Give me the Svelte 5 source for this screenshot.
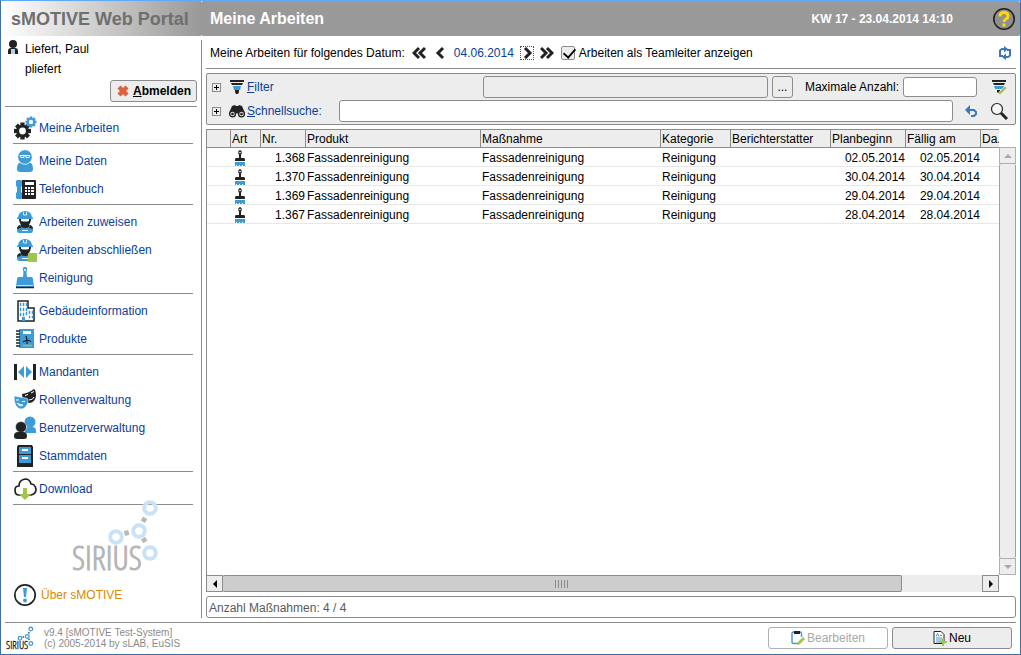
<script>
  const groups = [
    [{ label: 'Meine Arbeiten', icon: 'gears' }],
    [
      { label: 'Meine Daten', icon: 'person' },
      { label: 'Telefonbuch', icon: 'phone' }
    ],
    [
      { label: 'Arbeiten zuweisen', icon: 'worker' },
      { label: 'Arbeiten abschließen', icon: 'workerDone' },
      { label: 'Reinigung', icon: 'cleaning' }
    ],
    [
      { label: 'Gebäudeinformation', icon: 'building' },
      { label: 'Produkte', icon: 'book' }
    ],
    [
      { label: 'Mandanten', icon: 'clients' },
      { label: 'Rollenverwaltung', icon: 'masks' },
      { label: 'Benutzerverwaltung', icon: 'users' },
      { label: 'Stammdaten', icon: 'cabinet' }
    ],
    [{ label: 'Download', icon: 'cloud' }]
  ];

  const columns = [
    { label: '', width: 23 },
    { label: 'Art', width: 30 },
    { label: 'Nr.', width: 45 },
    { label: 'Produkt', width: 175 },
    { label: 'Maßnahme', width: 180 },
    { label: 'Kategorie', width: 70 },
    { label: 'Berichterstatter', width: 100 },
    { label: 'Planbeginn', width: 75 },
    { label: 'Fällig am', width: 75 },
    { label: 'Da.', width: 19 }
  ];

  const rows = [
    { nr: '1.368', date: '02.05.2014' },
    { nr: '1.370', date: '30.04.2014' },
    { nr: '1.369', date: '29.04.2014' },
    { nr: '1.367', date: '28.04.2014' }
  ];

  const total = columns.reduce((sum, c) => sum + c.width, 0);

  let teamLead = $state(true);
  let search = $state('');
  let maxCount = $state('');
</script>

{#snippet gear(cx, cy, r, color)}
  <g transform="translate({cx} {cy}) scale({r / 8})">
    {#each [0, 45, 90, 135] as a}
      <rect x="-2" y="-8" width="4" height="16" fill={color} transform="rotate({a})" />
    {/each}
    <circle r="6" fill={color} />
    <circle r="3.2" fill="#fff" />
  </g>
{/snippet}

{#snippet workerShape()}
  <path d="M3 20q0-5 5-6h6q5 1 5 6 0 3-2 3H5q-2 0-2-3z" fill="#3d9bd8" />
  <path d="M3 19q0-3 3-4l1 3zM19 19q0-3-3-4l-1 3z" fill="#222" />
  <path d="M7 14h8v3q-4 2-8 0z" fill="#222" />
  <path d="M8 20h6v1H8z" fill="#fff" />
  <path d="M5 9h12v1q-1 6-6 6t-6-6z" fill="#222" />
  <path d="M7 9h8v2q-4 1-8 0z" fill="#fff" />
  <path d="M3 8l1-1q1-6 7-6t7 6l1 1v1H3z" fill="#3d9bd8" />
  <path d="M9.500 2v3h3V2" stroke="#fff" stroke-width=".800" fill="none" />
{/snippet}

{#snippet menuIcon(name)}
  <svg class="menu-icon" viewBox="0 0 24 24" aria-hidden="true">
    {#if name === 'gears'}
      {@render gear(8.5, 15, 8.5, '#222')}
      {@render gear(17, 6, 5.5, '#3d9bd8')}
    {:else if name === 'person'}
      <path d="M3 20q0-7 5-7h6q5 0 5 7 0 3-3 3H6q-3 0-3-3z" fill="#3d9bd8" />
      <circle cx="11" cy="8" r="7.300" fill="#3d9bd8" stroke="#fff" stroke-width=".8" />
      <path d="M6 6.500h4v2H7zM12 6.500h4l-1 2h-3z" fill="#3d9bd8" stroke="#fff" />
      <path d="M9 6.500h4" stroke="#fff" />
    {:else if name === 'phone'}
      <path d="M8 3h13q1 0 1 1v17q0 1-1 1H8z" fill="#222" />
      <path d="M11 5h9v3h-9zM11 10h2v2h-2zM14 10h2v2h-2zM17 10h3v2h-3zM11 13h2v2h-2zM14 13h2v2h-2zM17 13h3v2h-3zM11 16h2v2h-2zM14 16h2v2h-2zM17 16h3v2h-3z" fill="#fff" />
      <path d="M3 3h4l1 1v5l-1 1v5l1 1v5l-1 1H3l-1-1v-5l1-1v-5L2 9V4z" fill="#3d9bd8" />
    {:else if name === 'worker'}
      {@render workerShape()}
    {:else if name === 'workerDone'}
      {@render workerShape()}
      <rect x="14" y="15" width="9" height="9" fill="#9fc54d" />
    {:else if name === 'cleaning'}
      <path d="M9 11l.500-5q-2-5 1.500-5t1.500 5l.500 5h4q2 0 2 2l1 8H2l1-8q0-2 2-2z" fill="#3d9bd8" />
      <circle cx="11" cy="4" r="1" fill="#fff" />
      <path d="M3 19.500h16" stroke="#fff" stroke-width=".700" />
      <path d="M2 21.500h18" stroke="#222" stroke-width="1.500" />
    {:else if name === 'building'}
      <path d="M4 2h10v7h6v13H4z" fill="#fff" stroke="#222" stroke-width="1.500" />
      <path d="M6 4h1v3H6zM9 4h1v3H9zM12 4h1v3h-1zM6 9h1v3H6zM9 9h1v3H9zM12 9h1v3h-1zM6 14h1v3H6zM9 14h1v3H9zM12 13h1v3h-1zM15 12h1v3h-1zM18 12h1v3h-1zM15 17h1v2h-1zM18 17h1v2h-1z" fill="#3d9bd8" stroke="#3d9bd8" stroke-width=".500" />
      <path d="M8 18h3v4H8z" fill="#3d9bd8" />
    {:else if name === 'book'}
      <rect x="5" y="2" width="15" height="19" fill="#3d9bd8" />
      <path d="M2 4h4M2 7h4M2 10h4M2 13h4M2 16h4M2 19h4" stroke="#222" stroke-width="1.500" />
      <path d="M9 4h8v3H9z" fill="#fff" />
      <path d="M13 13l-1-4M13 13l4 1.500M13 13l-4 2M13 13v4" stroke="#222" stroke-width="1.200" />
      <path d="M9 18.500h9" stroke="#9fc54d" stroke-width="1.500" />
    {:else if name === 'clients'}
      <path d="M0 4h3v16H0zM19 4h3v16h-3z" fill="#222" />
      <path d="M10 6v12l-6-6zM12 6v12l6-6z" fill="#3d9bd8" />
    {:else if name === 'masks'}
      <path d="M8 6q7-1 12-5 2 1 2 7-1 7-7 7-7-2-7-9z" fill="#222" />
      <path d="M11 7.500l3-1M17 5l3-1.500M15 12q4 0 5-3" stroke="#fff" fill="none" />
      <path d="M0 8q5 1 12 2 3 0 2 4-2 7-7 7-7-1-7-13z" fill="#3d9bd8" stroke="#fff" stroke-width=".500" />
      <path d="M2 12l3 0M8 13.500l3 0M3 15q3 2 6 2-3 2.500-6-2z" stroke="#fff" fill="none" />
    {:else if name === 'users'}
      <circle cx="16" cy="6" r="5.500" fill="#3d9bd8" />
      <path d="M11 17v-4q1-2 4-2h3q4 0 4 4v2z" fill="#3d9bd8" />
      <circle cx="7" cy="11" r="5.500" fill="#222" stroke="#fff" stroke-width=".500" />
      <path d="M0 20q0-4 4-4h5q4 0 4 4 0 3-3 3H3q-3 0-3-3z" fill="#222" />
    {:else if name === 'cabinet'}
      <path d="M4 1h14l1 2v20H3V3z" fill="#222" />
      <path d="M5 3h12v7H5zM5 11h12v8H5z" fill="#3d9bd8" />
      <path d="M8 5h6v2H8zM8 13h6v2H8z" fill="#fff" />
    {:else if name === 'cloud'}
      <path d="M7 18H5Q1 18 1 13q0-4 4-4 0-6 6-7 5 0 6 5 4 0 5 5 0 5-5 6h-2" fill="#fff" stroke="#222" stroke-width="1.700" />
      <path d="M9 11h4v6h4l-6 6-6-6h4z" fill="#9fc54d" />
    {:else if name === 'about'}
      <circle cx="11" cy="12" r="10.200" fill="#fff" stroke="#222" stroke-width="1.700" />
      <path d="M9 5h4l-1 9h-2z" fill="#3d9bd8" />
      <circle cx="11" cy="17.500" r="2" fill="#3d9bd8" />
    {/if}
  </svg>
{/snippet}

{#snippet logo(cls, ring, link, ink)}
  <svg class={cls} viewBox="0 0 88 72" role="img" aria-label="SIRIUS">
    <path d="M51 34l7-2M70 23l5-8M70 37l5 7" stroke={link} stroke-width="5" stroke-dasharray="4.500 20" stroke-dashoffset="-1.500" />
    <g fill="none" stroke={ring} stroke-width="4">
      <circle cx="44" cy="37" r="5.800" />
      <circle cx="67" cy="31" r="5.800" />
      <circle cx="78" cy="8" r="5.800" />
      <circle cx="78" cy="53" r="5.800" />
    </g>
    <text x="0" y="70" fill={ink} stroke={ink}>SIRIUS</text>
  </svg>
{/snippet}

{#snippet brush()}
  <svg class="brush" viewBox="0 0 12 16" aria-hidden="true">
    <path d="M5 8V5Q3 1 6 0q3 1 1 5v3h3q1 0 1 2H1q0-2 1-2z" fill="#222" />
    <circle cx="6" cy="2.500" r=".8" fill="#fff" />
    <path d="M1 10.500h10" stroke="#222" />
    <path d="M1 12h10v4H9v-1H8v1H6v-1H5v1H3v-1H2v1H1z" fill="#3d9bd8" />
  </svg>
{/snippet}

<div class="window">
  <header>
    <div class="brand">sMOTIVE Web Portal</div>
    <div class="titlebar">
      <h1>Meine Arbeiten</h1>
      <span class="clock">KW 17 - 23.04.2014 14:10</span>
      <button class="plain" aria-label="Hilfe">
        <svg width="24" height="24" viewBox="0 0 24 24">
          <circle cx="12" cy="12" r="10.200" fill="#8f8f8f" stroke="#222" stroke-width="1.600" />
          <path d="M8 9.500q0-4 4-4t4 3.500q0 2-2 3t-2 3" fill="none" stroke="#ffd800" stroke-width="3" />
          <path d="M10.500 16.500h3v3h-3z" fill="#ffd800" />
        </svg>
      </button>
    </div>
  </header>

  <div class="body">
    <aside>
      <div class="account">
        <div class="user">
          <svg width="12" height="16" viewBox="0 0 12 16" aria-hidden="true">
            <circle cx="6" cy="5" r="4" fill="#222" />
            <path d="M1 15v-3q0-3 3-3h4q3 0 3 3v3z" fill="#222" />
            <path d="M4 10h4v5H4z" fill="#a8d4f2" />
          </svg>
          <span>Liefert, Paul<br />pliefert</span>
        </div>
        <button class="btn logout">
          <svg width="14" height="14" viewBox="0 0 14 14" aria-hidden="true">
            <path d="M3 3l8 8M11 3l-8 8" stroke="#e0603f" stroke-width="4.500" />
          </svg>
          <span><u>A</u>bmelden</span>
        </button>
      </div>
      <nav>
        {#each groups as group}
          <ul>
            {#each group as item}
              <li><a href="#{item.icon}">{@render menuIcon(item.icon)}{item.label}</a></li>
            {/each}
          </ul>
        {/each}
      </nav>
      {@render logo('watermark', '#c9e2f5', '#b9b9b9', '#b5b5b5')}
      <a class="about" href="#about">{@render menuIcon('about')}Über sMOTIVE</a>
    </aside>

    <main>
      <div class="datebar">
        <span>Meine Arbeiten für folgendes Datum:</span>
        <button class="plain" aria-label="Woche zurück">
          <svg width="14" height="14" viewBox="0 0 14 14"><path d="M7 2L2 7l5 5M13 2L8 7l5 5" /></svg>
        </button>
        <button class="plain" aria-label="Tag zurück">
          <svg width="14" height="14" viewBox="0 0 14 14"><path d="M10 2L5 7l5 5" /></svg>
        </button>
        <a href="#datum">04.06.2014</a>
        <button class="plain focused" aria-label="Tag vor">
          <svg width="12" height="12" viewBox="0 0 12 12"><path d="M4 1l5 5-5 5" /></svg>
        </button>
        <button class="plain" aria-label="Woche vor">
          <svg width="14" height="14" viewBox="0 0 14 14"><path d="M1 2l5 5-5 5M7 2l5 5-5 5" /></svg>
        </button>
        <label class="check"><input type="checkbox" bind:checked={teamLead} />Arbeiten als Teamleiter anzeigen</label>
        <button class="plain refresh" aria-label="Aktualisieren">
          <svg width="14" height="14" viewBox="0 0 14 14">
            <path d="M5 10H2V4.500L4 3h3M9 4h3v5.500L10 11H7" fill="none" stroke="#3b78b8" />
            <path d="M6 0l4 3-4 3.500zM8 7.500L4 11l4 3z" fill="#3b78b8" />
          </svg>
        </button>
      </div>

      <section class="panel">
        <div class="line">
          <button class="expand" aria-label="Filter aufklappen"></button>
          <svg class="line-icon" viewBox="0 0 16 16" aria-hidden="true">
            <path d="M1 1h14v2H1zM2 4h12l-1 2H3z" fill="#222" />
            <path d="M4 7h8l-1 4H5z" fill="#3d9bd8" />
            <path d="M6 11h4v2l-1 2H7l-1-2z" fill="#222" />
          </svg>
          <a class="filter-link" href="#filter"><u>F</u>ilter</a>
          <input class="filter-text" type="text" aria-label="Filter" disabled />
          <button class="btn dots" aria-label="Filter auswählen">...</button>
          <label for="max">Maximale Anzahl:</label>
          <input id="max" type="text" bind:value={maxCount} />
          <button class="plain" aria-label="Filter bearbeiten">
            <svg width="18" height="18" viewBox="0 0 18 18">
              <path d="M2 2h14v2H2zM3 5h12l-1 2H4z" fill="#222" />
              <path d="M4 8h10l-1 3H5z" fill="#3d9bd8" />
              <path d="M7 12h3v3H8l-1-1z" fill="#222" />
              <path d="M8 17l1-3 6-6 2 2-6 6z" fill="#9fc54d" stroke="#fff" stroke-width=".500" />
            </svg>
          </button>
        </div>
        <div class="line">
          <button class="expand" aria-label="Schnellsuche aufklappen"></button>
          <svg class="line-icon" viewBox="0 0 16 16" aria-hidden="true">
            <path d="M0 10l3-7 3-1 1 1h2l1-1 3 1 3 7-4 4-4-4-4 4z" fill="#222" />
            <circle cx="3.500" cy="11" r="2.900" fill="#ddd" stroke="#222" stroke-width="1.300" />
            <circle cx="12.500" cy="11" r="2.900" fill="#ddd" stroke="#222" stroke-width="1.300" />
            <circle cx="3.500" cy="11" r="1.300" fill="#222" />
            <circle cx="12.500" cy="11" r="1.300" fill="#222" />
          </svg>
          <label class="search-label" for="search"><u>S</u>chnellsuche:</label>
          <input id="search" type="text" bind:value={search} />
          <button class="plain undo" aria-label="Zurücksetzen">
            <svg width="14" height="14" viewBox="0 0 14 14">
              <path d="M4 6h6l2 2v2l-2 2H7" fill="none" stroke="#3b78b8" stroke-width="2" />
              <path d="M6 1v10L1 6z" fill="#3b78b8" />
            </svg>
          </button>
          <button class="plain" aria-label="Suchen">
            <svg width="18" height="18" viewBox="0 0 18 18">
              <circle cx="7" cy="7" r="5.500" fill="#f6f6f6" stroke="#222" stroke-width="1.200" />
              <path d="M11 11l6 6" stroke="#222" stroke-width="3" />
            </svg>
          </button>
        </div>
      </section>

      <div class="grid">
        <div class="sheet">
          <table>
            <colgroup>
              {#each columns as c}
                <col style="width: {(c.width / total) * 100}%" />
              {/each}
            </colgroup>
            <thead>
              <tr>
                {#each columns as c}
                  <th scope="col">{c.label}</th>
                {/each}
              </tr>
            </thead>
            <tbody>
              {#each rows as row}
                <tr>
                  <td></td>
                  <td>{@render brush()}</td>
                  <td class="num">{row.nr}</td>
                  <td>Fassadenreinigung</td>
                  <td>Fassadenreinigung</td>
                  <td>Reinigung</td>
                  <td></td>
                  <td class="num">{row.date}</td>
                  <td class="num">{row.date}</td>
                  <td></td>
                </tr>
              {/each}
            </tbody>
          </table>
        </div>
        <div class="vbar">
          <button aria-label="Nach oben"><svg width="8" height="8" viewBox="0 0 8 8"><path d="M0 6l4-4 4 4z" /></svg></button>
          <div class="vthumb"></div>
          <button aria-label="Nach unten"><svg width="8" height="8" viewBox="0 0 8 8"><path d="M0 2l4 4 4-4z" /></svg></button>
        </div>
        <div class="hbar">
          <button aria-label="Nach links"><svg width="8" height="8" viewBox="0 0 8 8"><path d="M6 0L2 4l4 4z" /></svg></button>
          <div class="track"><div class="hthumb"><span class="grip"></span></div></div>
          <button aria-label="Nach rechts"><svg width="8" height="8" viewBox="0 0 8 8"><path d="M2 0l4 4-4 4z" /></svg></button>
        </div>
      </div>

      <div class="status" role="status">Anzahl Maßnahmen: {rows.length} / {rows.length}</div>
    </main>
  </div>

  <footer>
    {@render logo('footer-logo', '#3d9bd8', '#555', '#222')}
    <p>v9.4 [sMOTIVE Test-System]<br />(c) 2005-2014 by sLAB, EuSIS</p>
    <button class="btn" disabled>
      <svg width="14" height="16" viewBox="0 0 14 16" aria-hidden="true">
        <path d="M8 13.500H2.500q-1.500 0-1.500-1.500V3.500Q1 2 2.500 2H9q1.500 0 1.500 1.500V7" fill="none" stroke="#3d9bd8" stroke-width="1.400" />
        <path d="M3 1h6v3H3z" fill="#222" />
        <path d="M6 15l1-3 5-5 2 2-5 5z" fill="#9fc54d" />
      </svg>
      Bearbeiten
    </button>
    <button class="btn">
      <svg width="14" height="16" viewBox="0 0 14 16" aria-hidden="true">
        <path d="M1 1.500h7l3 3v9H1z" fill="#fff" stroke="#222" />
        <path d="M3 6.500l1.500-3L6 6.500M7 5.500h2M3 8h6M3 10h6M3 12h4" fill="none" stroke="#3d9bd8" />
        <path d="M9 8h2v3h3v2h-3v3H9v-3H6v-2h3z" fill="#9fc54d" />
      </svg>
      Neu
    </button>
  </footer>
</div>

<style>
  :global(body) {
    margin: 0;
  }
  .window, .window * {
    box-sizing: border-box;
  }
  .window {
    display: flex;
    flex-direction: column;
    min-height: 100vh;
    border: 1px solid #3d6fa8;
    border-top-color: #62a8f8;
    background: #fff;
    color: #000;
    font: 12px/16px "Liberation Sans", Arial, sans-serif;
  }
  button, input {
    font: inherit;
    color: inherit;
  }
  button {
    padding: 0;
  }
  svg {
    display: block;
    flex: none;
  }
  a {
    color: #0a409c;
    text-decoration: none;
  }
  .plain {
    border: 0;
    background: none;
  }
  .btn {
    display: flex;
    align-items: center;
    justify-content: center;
    height: 22px;
    border: 1px solid #8c8c8c;
    border-radius: 3px;
    background: #ededed;
  }

  header {
    display: flex;
    height: 35px;
  }
  .brand {
    width: 200px;
    padding-left: 10px;
    background: linear-gradient(to right, #fff, #999);
    color: #6f6f6f;
    font-size: 18px;
    font-weight: bold;
    line-height: 36px;
  }
  .titlebar {
    display: flex;
    flex: 1;
    align-items: center;
    padding: 0 4px 0 9px;
    border-radius: 2px;
    background: #999;
    color: #fff;
    font-weight: bold;
  }
  h1 {
    flex: 1;
    margin: 0;
    font-size: 16px;
  }
  .clock {
    margin-right: 39px;
  }

  .body {
    display: flex;
    flex: 1;
    padding-top: 4px;
  }
  aside {
    display: flex;
    flex-direction: column;
    width: 201px;
    border-right: 1px solid #8c8c8c;
  }
  .account {
    display: flex;
    flex-direction: column;
    margin: -1px 4px 0;
    padding-bottom: 4px;
    border-bottom: 1px solid #8c8c8c;
  }
  .user {
    display: flex;
    gap: 6px;
    padding-left: 2px;
    line-height: 20px;
  }
  .logout {
    gap: 3px;
    align-self: flex-end;
    width: 87px;
    margin-top: 1px;
    font-weight: bold;
  }
  nav {
    padding: 7px 8px 0 12px;
  }
  ul {
    margin: 0 0 3px;
    padding: 0 0 1px;
    border-bottom: 1px solid #8c8c8c;
    list-style: none;
  }
  li a, .about {
    display: flex;
    align-items: center;
    height: 28px;
  }
  .menu-icon {
    width: 24px;
    height: 24px;
    margin: 0 1px;
  }
  .watermark {
    width: 88px;
    height: 72px;
    margin: -8px 0 0 71px;
    overflow: visible;
  }
  .watermark text, .footer-logo text {
    font-family: "Open Sans Condensed Light", "Open Sans Condensed", "Liberation Sans Narrow", sans-serif;
    font-size: 33px;
    font-weight: 300;
  }
  .about {
    gap: 2px;
    margin: 9px 0 0 12px;
    color: #d88a00;
  }

  main {
    display: flex;
    flex: 1;
    flex-direction: column;
    min-width: 0;
    padding: 0 4px;
  }
  .datebar {
    display: flex;
    align-items: center;
    gap: 7px;
    height: 29px;
    padding: 0 4px 3px;
    border-bottom: 1px solid #8c8c8c;
  }
  .datebar .plain:not(.refresh) path {
    fill: none;
    stroke: #222;
    stroke-width: 3;
  }
  .refresh path:first-child {
    stroke-width: 2;
  }
  .focused {
    outline: 1px dotted #555;
  }
  .check {
    display: flex;
    align-items: center;
    gap: 4px;
  }
  .check input {
    width: 14px;
    height: 14px;
    margin: 0;
    border: 1px solid #8c8c8c;
    border-radius: 2px;
    background: #ededed;
    appearance: none;
  }
  .check input:checked::before {
    display: block;
    width: 11px;
    height: 6px;
    margin: 1px;
    border: solid #000;
    border-width: 0 0 2px 2px;
    content: "";
    transform: rotate(-48deg) scale(0.9);
  }
  .refresh {
    margin-left: auto;
  }

  .panel {
    display: flex;
    flex-direction: column;
    gap: 2px;
    margin-top: 4px;
    padding: 2px 7px 2px 5px;
    border: 1px solid #8c8c8c;
    border-radius: 2px;
    background: #ededed;
  }
  .line {
    display: flex;
    align-items: center;
    height: 22px;
  }
  .expand {
    width: 9px;
    height: 9px;
    margin-right: 8px;
    border: 1px solid #8c8c8c;
    background:
      linear-gradient(#000, #000) center / 5px 1px no-repeat,
      linear-gradient(#000, #000) center / 1px 5px no-repeat,
      #ededed;
  }
  .line-icon {
    width: 16px;
    height: 16px;
    margin-right: 2px;
  }
  .filter-link {
    flex: 236;
  }
  .search-label {
    width: 92px;
    color: #0a409c;
  }
  .line input {
    min-width: 0;
    height: 22px;
    padding: 0 4px;
    border: 1px solid #8c8c8c;
    border-radius: 3px;
    background: #fff;
  }
  .line .filter-text {
    flex: 275;
    background: #ededed;
  }
  .dots {
    width: 21px;
    margin: 0 12px 0 4px;
  }
  .line #max {
    width: 74px;
    height: 20px;
    margin: 0 13px 0 4px;
  }
  .line #search {
    flex: 1;
  }
  .undo {
    margin: 0 12px 0 11px;
  }

  .grid {
    display: grid;
    flex: 1;
    grid-template-columns: 1fr 17px;
    grid-template-rows: 1fr 17px;
    margin-top: 4px;
  }
  .sheet {
    overflow: hidden;
    border-left: 1px solid #8c8c8c;
  }
  table {
    width: 100%;
    border-collapse: separate;
    border-spacing: 0;
    table-layout: fixed;
  }
  th, td {
    height: 19px;
    padding: 2px 0 0 1px;
    line-height: 16px;
    text-align: left;
    white-space: nowrap;
  }
  th {
    border: solid #8c8c8c;
    border-width: 1px 0 1px 1px;
    background: #ededed;
    font-weight: normal;
    line-height: 15px;
  }
  th:first-child {
    border-left: 0;
  }
  td {
    padding-left: 2px;
    border-bottom: 1px solid #e8e8e8;
  }
  .num {
    text-align: right;
  }
  .brush {
    width: 12px;
    height: 16px;
    margin-left: 2px;
  }
  .vbar {
    display: flex;
    flex-direction: column;
    margin-top: 18px;
  }
  .vbar button, .hbar button {
    display: flex;
    flex: none;
    align-items: center;
    justify-content: center;
    width: 17px;
    height: 17px;
    border: 1px solid #8c8c8c;
    background: #ededed;
  }
  .vbar button {
    border-color: #b0b0b0;
    fill: #aaa;
  }
  .vthumb {
    flex: 1;
    border: solid #a0a0a0;
    border-width: 0 1px;
    border-radius: 2px;
    background: #ededed;
  }
  .hbar {
    display: flex;
  }
  .track {
    flex: 1;
    background: #ededed;
  }
  .hthumb {
    display: flex;
    align-items: center;
    justify-content: center;
    width: 89.5%;
    height: 17px;
    border: solid #8c8c8c;
    border-width: 1px 1px 1px 0;
    border-radius: 2px;
    background: #cdcdcd;
  }
  .grip {
    width: 14px;
    height: 8px;
    background: repeating-linear-gradient(to right, #8c8c8c 0 1px, transparent 1px 3px);
  }
  .status {
    height: 22px;
    margin-top: 4px;
    padding-left: 2px;
    border: 1px solid #8c8c8c;
    border-radius: 3px;
    color: #5a5a5a;
    line-height: 22px;
  }

  footer {
    display: flex;
    align-items: center;
    gap: 4px;
    height: 32px;
    margin: 4px 4px 0;
    padding: 0 4px 2px 1px;
    border-top: 1px solid #8c8c8c;
  }
  .footer-logo {
    width: 28px;
    height: 24px;
    overflow: visible;
  }
  p {
    flex: 1;
    margin: 0 0 0 6px;
    color: #8a8a8a;
    font-size: 10px;
    line-height: 11px;
  }
  footer .btn {
    gap: 2px;
    width: 120px;
  }
  footer .btn:disabled {
    border-color: #b0b0b0;
    background: #fff;
    color: #a8a8a8;
  }
</style>
